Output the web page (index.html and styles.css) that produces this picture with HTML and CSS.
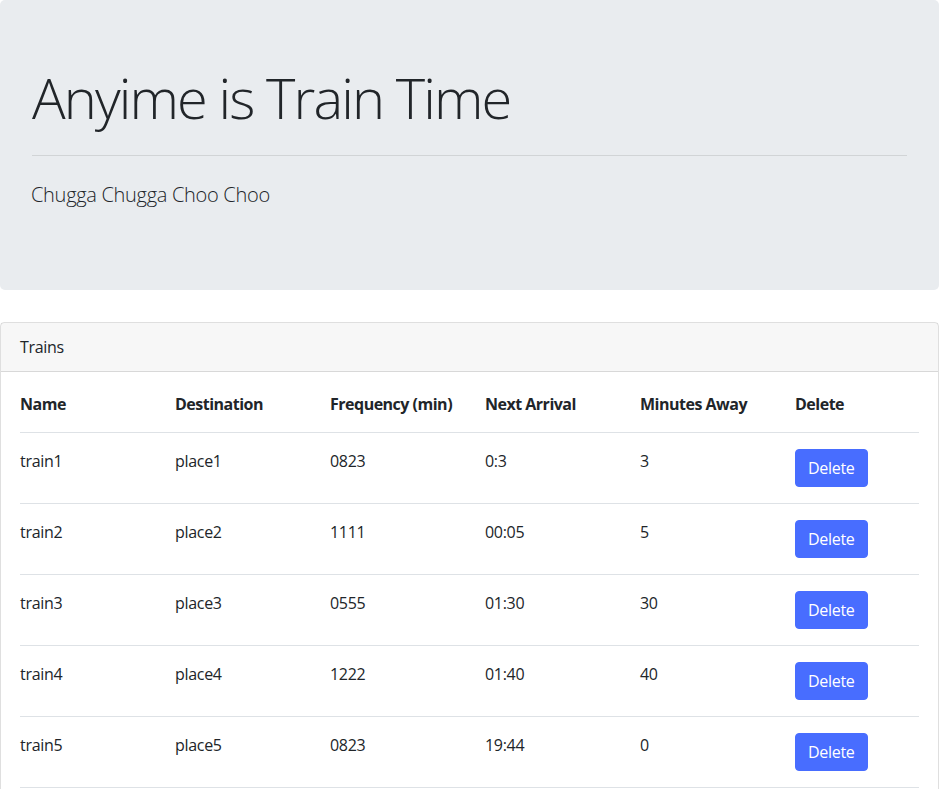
FILE: index.html
```html
<!DOCTYPE html>
<html lang="en">
<head>
<meta charset="utf-8">
<title>Train Time</title>
<link rel="stylesheet" href="styles.css">
</head>
<body>
<div class="jumbotron">
  <h1 class="display">Anyime is Train Time</h1>
  <hr class="divider">
  <p class="lead">Chugga Chugga Choo Choo</p>
</div>
<div class="card">
  <div class="card-header">Trains</div>
  <div class="card-body">
    <table class="trains">
      <thead>
        <tr><th>Name</th><th>Destination</th><th>Frequency (min)</th><th>Next Arrival</th><th>Minutes Away</th><th>Delete</th></tr>
      </thead>
      <tbody>
        <tr><td>train1</td><td>place1</td><td>0823</td><td>0:3</td><td>3</td><td><button class="btn">Delete</button></td></tr>
        <tr><td>train2</td><td>place2</td><td>1111</td><td>00:05</td><td>5</td><td><button class="btn">Delete</button></td></tr>
        <tr><td>train3</td><td>place3</td><td>0555</td><td>01:30</td><td>30</td><td><button class="btn">Delete</button></td></tr>
        <tr><td>train4</td><td>place4</td><td>1222</td><td>01:40</td><td>40</td><td><button class="btn">Delete</button></td></tr>
        <tr><td>train5</td><td>place5</td><td>0823</td><td>19:44</td><td>0</td><td><button class="btn">Delete</button></td></tr>
      </tbody>
    </table>
  </div>
</div>
</body>
</html>
```

FILE: styles.css
```css
* { box-sizing: border-box; }
html, body { margin: 0; padding: 0; }
body {
  font-family: "Open Sans", "Noto Sans", sans-serif;
  font-size: 16px;
  line-height: 1.5;
  letter-spacing: -0.3px;
  color: #212529;
  background: #fff;
}
.jumbotron {
  background: #e9ecef;
  border-radius: 5px;
  padding: 64px 32px;
  margin-bottom: 32px;
}
.display {
  font-size: 56px;
  font-weight: 300;
  line-height: 1.2;
  letter-spacing: -1.9px;
  margin: 0 0 8px;
}
.divider {
  border: 0;
  border-top: 1px solid rgba(0,0,0,0.1);
  margin: 24px 0;
}
.lead {
  font-size: 20px;
  font-weight: 300;
  letter-spacing: -0.3px;
  margin: 0 0 16px -1px;
}
.card {
  border: 1px solid rgba(0,0,0,0.125);
  border-radius: 4px;
}
.card-header {
  background: rgba(0,0,0,0.03);
  padding: 12px 19px;
  border-bottom: 1px solid rgba(0,0,0,0.125);
}
.card-body {
  padding: 20px 19px;
}
.trains {
  width: 100%;
  border-collapse: collapse;
  table-layout: fixed;
}
.trains th, .trains td {
  text-align: left;
  vertical-align: top;
  padding: 16px 0;
  width: 155px;
}
.trains th:last-child, .trains td:last-child { width: auto; }
.trains th {
  font-weight: 700;
  letter-spacing: -0.5px;
  padding-top: 0;
  border-bottom: 1px solid #dee2e6;
}
.trains td { border-bottom: 1px solid #dee2e6; }
.btn {
  font-family: inherit;
  font-size: 16px;
  line-height: 24px;
  letter-spacing: -0.3px;
  color: #fff;
  background: #486dff;
  border: 1px solid #486dff;
  border-radius: 4px;
  padding: 6px 12px;
}
```
